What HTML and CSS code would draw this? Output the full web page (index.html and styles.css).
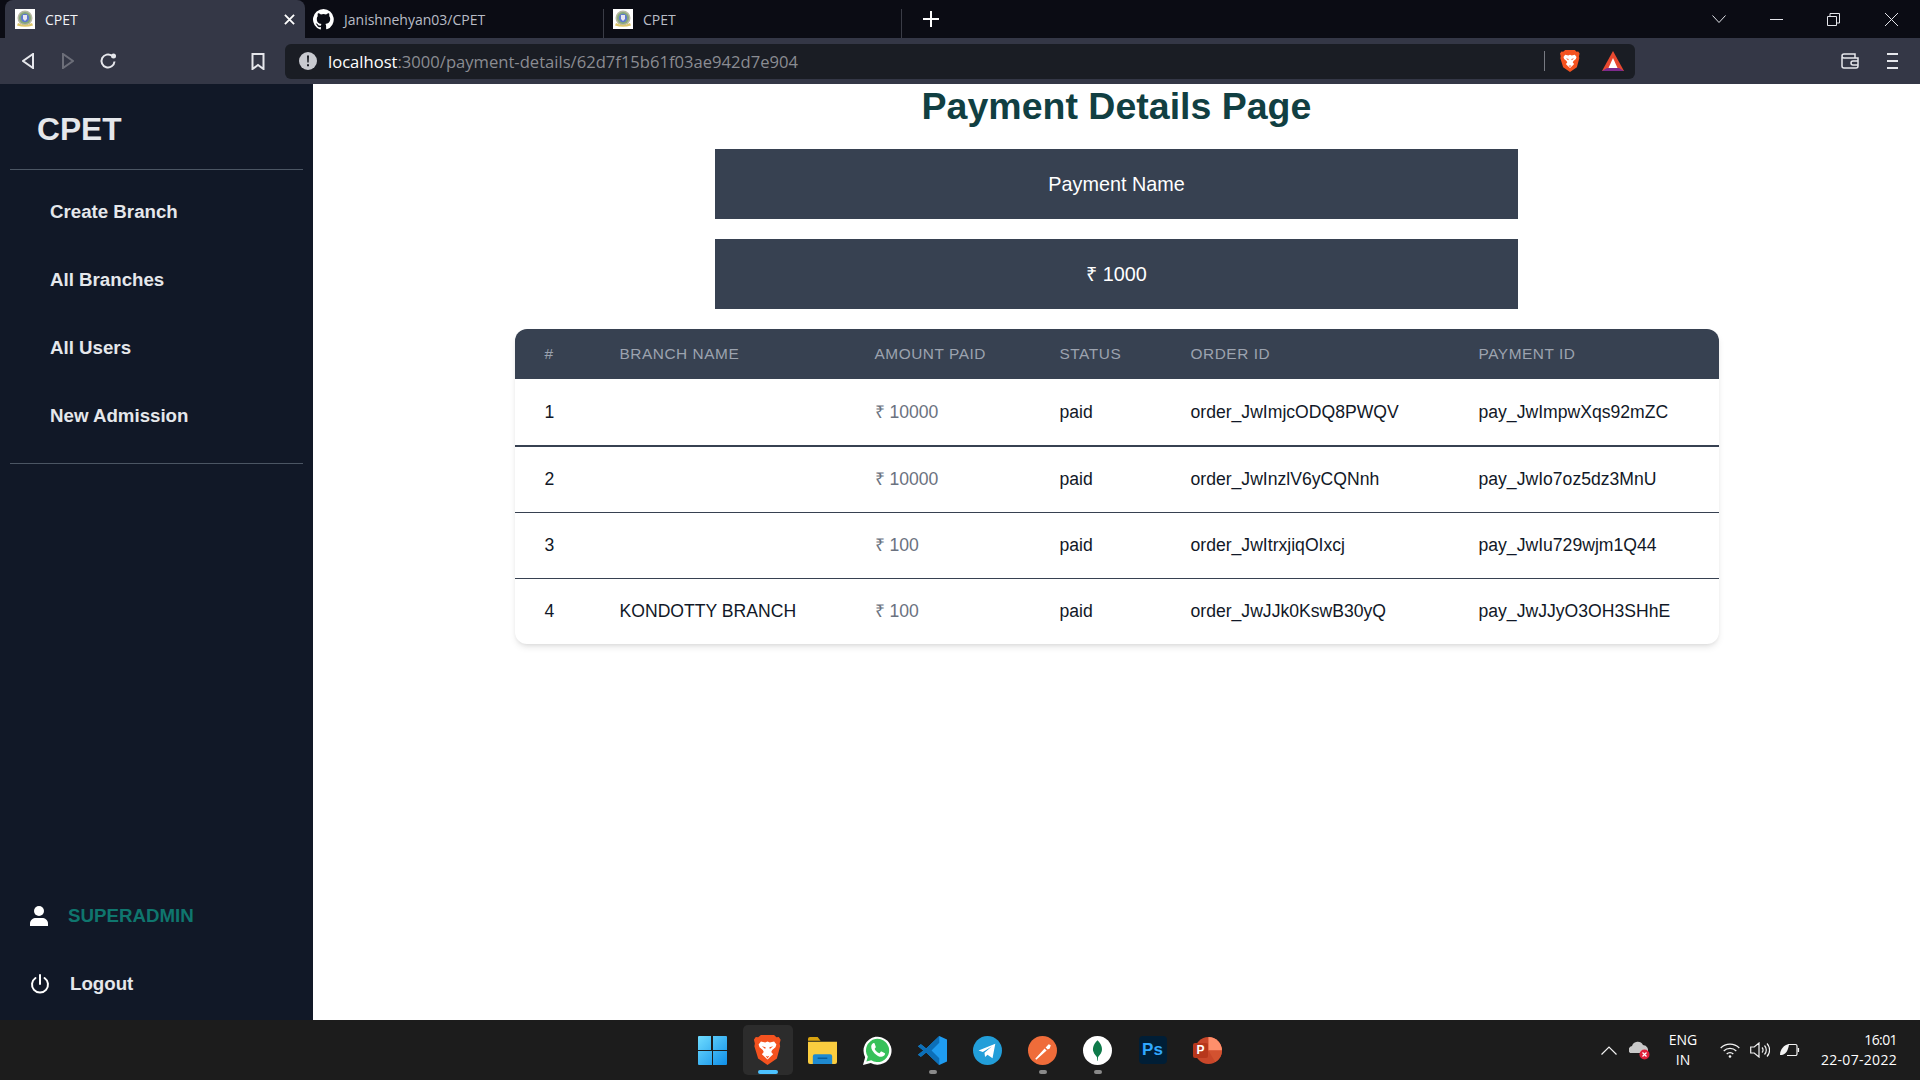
FILE: index.html
```html
<!DOCTYPE html>
<html>
    <head>
        <meta charset="utf-8">
        <title>CPET</title>
        <link rel="stylesheet" href="styles.css">
    </head>
    <body>
        <svg class="defs" width="0" height="0">
            <symbol id="favicon" viewBox="0 0 20 20">
                <rect width="20" height="20" fill="#fff"/>
                <circle cx="10" cy="9" r="7.500" fill="#b9b8a4"/>
                <circle cx="10" cy="9" r="6" fill="#86a878"/>
                <circle cx="10" cy="9" r="4.200" fill="#5f78cf"/>
                <path d="M8 6h4v4l-2 2-2-2z" fill="#e8e6f0"/>
                <path d="M3 14q7 4 14 0l1 2.500q-8 2.500-16 0z" fill="#dcc66a"/>
            </symbol>
            <symbol id="lion" viewBox="0 0 28 32">
                <path d="M7 0h14l2.500 2.500 2.500-.5 2 3-1 4 .5 3L24 25l-10 7L4 25 .0 12l.5-3-1-4 2-3 2.500.5z" fill="#f4521f"/>
                <path d="M7 7l4.500 1L14 7l2.500 1L21 7l2.500 3-1 3-3.500 3-1 2 2 2.500-2 2-4 3.500-4-3.500-2-2 2-2.500-1-2-3.500-3-1-3z" fill="#fff"/>
                <path d="M8 12l4 1-.5 2zM20 12l-4 1 .5 2zM12 22l2 1 2-1-2 3z" fill="#f4521f"/>
            </symbol>
        </svg>

        <div class="tabstrip">
            <div class="tab active">
                <svg class="favicon"><use href="#favicon"/></svg>
                <span class="tab-title">CPET</span>
                <svg class="tab-close" viewBox="0 0 12 12"><path d="M1 1l10 10M11 1L1 11"/></svg>
            </div>
            <div class="tab second">
                <svg class="github" viewBox="0 0 16 16"><path d="M8 0a8 8 0 0 0-2.500 15.600c.4.100.5-.2.5-.4v-1.400c-2.200.5-2.700-1-2.700-1-.4-.9-.9-1.200-.9-1.200-.7-.5.1-.5.1-.5.8.1 1.200.8 1.200.8.7 1.200 1.900.9 2.300.7.1-.5.3-.9.5-1.100-1.800-.2-3.600-.9-3.600-4 0-.9.3-1.600.8-2.100-.1-.2-.4-1 .1-2.100 0 0 .7-.2 2.200.8a7.600 7.600 0 0 1 4 0c1.500-1 2.200-.8 2.200-.8.4 1.100.2 1.900.1 2.100.5.6.8 1.300.8 2.100 0 3.100-1.900 3.700-3.700 3.900.3.3.6.8.6 1.500v2.200c0 .2.100.5.6.4A8 8 0 0 0 8 0z"/></svg>
                <span class="tab-title dim">Janishnehyan03/CPET</span>
            </div>
            <span class="tab-sep"></span>
            <div class="tab third">
                <svg class="favicon"><use href="#favicon"/></svg>
                <span class="tab-title dim">CPET</span>
            </div>
            <span class="tab-sep"></span>
            <svg class="new-tab" viewBox="0 0 16 16"><path d="M8 0v16M0 8h16"/></svg>
            <div class="window-btns">
                <svg class="win-chevron" viewBox="0 0 14 8"><path d="M.5.5L7 7.500 13.500.5"/></svg>
                <svg class="win-min" viewBox="0 0 13 1"><path d="M0 .5h13"/></svg>
                <svg class="win-restore" viewBox="0 0 13 13"><path d="M.5 3.500h9v9h-9zM3 3.500V.5h9.500v9.500H9.500"/></svg>
                <svg class="win-close" viewBox="0 0 13 13"><path d="M0 0l13 13M13 0L0 13"/></svg>
            </div>
        </div>

        <div class="toolbar">
            <svg class="nav-back" viewBox="0 0 12 16"><path d="M11 1v14L1 8z"/></svg>
            <svg class="nav-forward" viewBox="0 0 12 16"><path d="M1 1v14l10-7z"/></svg>
            <svg class="nav-reload" viewBox="0 0 18 18"><path d="M15.500 9.500a6.500 6.500 0 1 1-2.500-5.700"/><circle cx="14.500" cy="4" r="2.500" class="solid"/></svg>
            <svg class="nav-bookmark" viewBox="0 0 14 17"><path d="M1.500 1h11v15L7 12l-5.500 4z"/></svg>
            <div class="omnibox">
                <svg class="site-info" viewBox="0 0 18 18"><circle cx="9" cy="9" r="9" fill="#c8cad0"/><path d="M8 3.500h2l-.3 7H8.300zM8 12.200h2v2H8z" fill="#1a1d24"/></svg>
                <span class="url"><span class="host">localhost</span>:3000/payment-details/62d7f15b61f03ae942d7e904</span>
                <span class="omni-sep"></span>
                <svg class="omni-lion"><use href="#lion"/></svg>
                <svg class="omni-bat" viewBox="0 0 22 20">
                    <path d="M11 0l11 20H0z" fill="#e8492f"/>
                    <path d="M0 20l5-3h12l5 3z" fill="#7d2a8c"/>
                    <path d="M11 7l4.500 10h-9z" fill="#fff"/>
                </svg>
            </div>
            <svg class="wallet" viewBox="0 0 18 16"><path d="M1 4v9a2 2 0 0 0 2 2h12a2 2 0 0 0 2-2V5H3a2 2 0 0 1-2-2 2 2 0 0 1 2-2h11v4M17 8h-5a2 2 0 0 0 0 4h5"/></svg>
            <svg class="menu" viewBox="0 0 11 16"><path d="M0 1h11M0 8h11M0 15h11"/></svg>
        </div>

        <div class="app">
            <aside class="sidebar">
                <div class="logo">CPET</div>
                <div class="divider"></div>
                <nav class="links">
                    <a class="link">Create Branch</a>
                    <a class="link">All Branches</a>
                    <a class="link">All Users</a>
                    <a class="link">New Admission</a>
                </nav>
                <div class="divider"></div>
                <div class="side-bottom">
                    <div class="side-row">
                        <svg class="user-icon" viewBox="0 0 18 20"><circle cx="9" cy="5" r="5"/><path d="M0 20v-2.500C0 14 3 12 6 12h6c3 0 6 2 6 5.500V20z"/></svg>
                        <span class="username">SUPERADMIN</span>
                    </div>
                    <div class="side-row">
                        <svg class="power-icon" viewBox="0 0 20 20"><path d="M5.500 4a8 8 0 1 0 9 0M10 1v9"/></svg>
                        <span class="logout">Logout</span>
                    </div>
                </div>
            </aside>

            <main class="content">
                <h1>Payment Details Page</h1>
                <div class="info-box">Payment Name</div>
                <div class="info-box">₹ 1000</div>

                <div class="card">
                    <table>
                        <thead>
                            <tr>
                                <th class="col-num">#</th>
                                <th class="col-branch">Branch Name</th>
                                <th class="col-amount">Amount Paid</th>
                                <th class="col-status">Status</th>
                                <th class="col-order">Order ID</th>
                                <th>Payment ID</th>
                            </tr>
                        </thead>
                        <tbody>
                            <tr class="first">
                                <td>1</td>
                                <td></td>
                                <td class="amount">₹ 10000</td>
                                <td>paid</td>
                                <td>order_JwImjcODQ8PWQV</td>
                                <td>pay_JwImpwXqs92mZC</td>
                            </tr>
                            <tr>
                                <td>2</td>
                                <td></td>
                                <td class="amount">₹ 10000</td>
                                <td>paid</td>
                                <td>order_JwInzlV6yCQNnh</td>
                                <td>pay_JwIo7oz5dz3MnU</td>
                            </tr>
                            <tr>
                                <td>3</td>
                                <td></td>
                                <td class="amount">₹ 100</td>
                                <td>paid</td>
                                <td>order_JwItrxjiqOIxcj</td>
                                <td>pay_JwIu729wjm1Q44</td>
                            </tr>
                            <tr class="last">
                                <td>4</td>
                                <td>KONDOTTY BRANCH</td>
                                <td class="amount">₹ 100</td>
                                <td>paid</td>
                                <td>order_JwJJk0KswB30yQ</td>
                                <td>pay_JwJJyO3OH3SHhE</td>
                            </tr>
                        </tbody>
                    </table>
                </div>
            </main>
        </div>

        <div class="taskbar">
            <div class="task-left"></div>
            <div class="task-icons">
                <div class="task-item">
                    <svg viewBox="0 0 29 29">
                        <defs><linearGradient id="winblue" x1="0" y1="0" x2="1" y2="1"><stop offset="0" stop-color="#6fdcff"/><stop offset="1" stop-color="#0f8fe8"/></linearGradient></defs>
                        <path d="M0 1a1 1 0 0 1 1-1h12v14H0zM15 0h13a1 1 0 0 1 1 1v13H15zM0 15h14v14H1a1 1 0 0 1-1-1zM15 15h14v13a1 1 0 0 1-1 1H15z" fill="url(#winblue)"/>
                    </svg>
                </div>
                <div class="task-item current">
                    <svg class="task-lion"><use href="#lion"/></svg>
                    <span class="dot blue"></span>
                </div>
                <div class="task-item">
                    <svg viewBox="0 0 30 28">
                        <path d="M0 2a2 2 0 0 1 2-2h8l3 4h-13z" fill="#d9a30f"/>
                        <path d="M0 5h30v21a2 2 0 0 1-2 2H2a2 2 0 0 1-2-2z" fill="#fbcd3f"/>
                        <path d="M5 24a2 2 0 0 1 0-1v-3a2 2 0 0 1 2-2h16a2 2 0 0 1 2 2v8H5z" fill="#1f8ad0"/>
                        <path d="M10 22h10" stroke="#0b5c98" stroke-width="1.500"/>
                    </svg>
                </div>
                <div class="task-item">
                    <svg viewBox="0 0 30 30">
                        <path d="M0 30l2.200-8A14.500 14.500 0 1 1 8 27.900z" fill="#fff"/>
                        <path d="M3.500 26.500l1.500-5A12 12 0 1 1 8.500 25z" fill="#37c15a"/>
                        <path d="M10.500 7.500c-1 .5-2 2-2 3.500 0 4.500 6 10.500 10.500 10.500 1.500 0 3-1 3.500-2 .3-.8.3-1.500.2-1.700l-3.500-1.800c-.4-.1-.7 0-.9.300l-1 1.300c-.2.200-.5.300-.8.100-1.800-.8-3.400-2.300-4.300-4-.1-.3-.1-.5.100-.7l.8-1c.2-.3.2-.6.100-.9L12 7.700c-.2-.4-1-.4-1.500-.2z" fill="#fff"/>
                    </svg>
                </div>
                <div class="task-item">
                    <svg viewBox="0 0 30 30">
                        <path d="M22 0l8 3.500v23L22 30 8.500 17 3 21.500 0 19.500 5.500 15 0 10.500 3 8.500 8.500 13z" fill="#1f9cf0"/>
                        <path d="M22 0v7l-8 8 8 8v7L8.500 17 3 21.500 0 19.500 5.500 15 0 10.500 3 8.500 8.500 13z" fill="#0c6fb8"/>
                    </svg>
                    <span class="dot"></span>
                </div>
                <div class="task-item">
                    <svg viewBox="0 0 26 26">
                        <circle cx="13" cy="13" r="13" fill="#229ed9"/>
                        <path d="M5 13l15-6-2.500 13-4.500-3.200-2.200 2-.5-3.800 6.500-5.500-8 4.800z" fill="#fff"/>
                    </svg>
                </div>
                <div class="task-item">
                    <svg viewBox="0 0 28 28">
                        <circle cx="14" cy="14" r="14" fill="#ef6c3a"/>
                        <path d="M7 22l9-10 2 2-10 9zM17 11l3-3 2 1-1 3-2 1z" fill="#fff"/>
                    </svg>
                    <span class="dot"></span>
                </div>
                <div class="task-item">
                    <svg viewBox="0 0 28 28">
                        <circle cx="14" cy="14" r="14" fill="#fff"/>
                        <path d="M14 4c4 4 5 8 4 11-.8 3-3 4.500-3.500 5.500L14.300 24h-.6l-.2-3.500C13 19.500 10.800 18 10 15c-1-3 0-7 4-11z" fill="#0f7a4a"/>
                    </svg>
                    <span class="dot"></span>
                </div>
                <div class="task-item">
                    <div class="ps-icon">Ps</div>
                </div>
                <div class="task-item">
                    <div class="ppt-icon">
                        <svg viewBox="0 0 30 30">
                            <circle cx="16" cy="15" r="14" fill="#c9472a"/>
                            <path d="M16 1a14 14 0 0 1 14 14H16z" fill="#ff8f6b"/>
                            <path d="M16 15h14a14 14 0 0 1-7 12z" fill="#d35230"/>
                        </svg>
                        <span class="ppt-letter">P</span>
                    </div>
                </div>
            </div>
            <div class="tray">
                <svg class="tray-chevron" viewBox="0 0 16 9"><path d="M.5 8.500L8 1l7.500 7.500"/></svg>
                <svg class="tray-cloud" viewBox="0 0 21 20">
                    <path d="M1 13a4 4 0 0 1 2-7 6 6 0 0 1 11-1 5 5 0 0 1 4 8z" fill="#c9c9c9"/>
                    <circle cx="15.500" cy="14.500" r="5" fill="#e0203a"/>
                    <path d="M13.500 12.500l4 4M17.500 12.500l-4 4" stroke="#fff" stroke-width="1.200"/>
                </svg>
                <div class="lang"><span>ENG</span><span>IN</span></div>
                <svg class="tray-wifi" viewBox="0 0 20 15"><path d="M.7 5a13 13 0 0 1 18.600 0M3.700 8a9 9 0 0 1 12.600 0M6.700 11a4.500 4.500 0 0 1 6.600 0"/><circle cx="10" cy="13.500" r="1.300" class="solid"/></svg>
                <svg class="tray-sound" viewBox="0 0 20 16"><path d="M.7 5h3.500L9 1v14l-4.800-4H.7zM12 5.500a3.500 3.500 0 0 1 0 5M14.500 3.500a6.500 6.500 0 0 1 0 9M17 1.500a9.500 9.500 0 0 1 0 13"/></svg>
                <svg class="tray-battery" viewBox="0 0 20 14"><path d="M8 1.500h7.500a1.500 1.500 0 0 1 1.500 1.500v8a1.500 1.500 0 0 1-1.500 1.500H7M18.500 5v4"/><path d="M0 12c0-6 4-10 9-11-.5 6-3 10-7 11z" class="solid"/></svg>
                <div class="clock"><span class="time">16:01</span><span class="date">22-07-2022</span></div>
            </div>
        </div>
    </body>
</html>
```

FILE: styles.css
```css
*
{
    box-sizing: border-box;
}

html, body
{
    margin: 0;
    padding: 0;
}

body
{
    width: 1920px;
    height: 1080px;
    overflow: hidden;
    display: flex;
    flex-direction: column;
    font-family: "Liberation Sans", Arial, sans-serif;
    background-color: #fff;
}

.defs
{
    position: absolute;
}

svg
{
    display: block;
    flex: none;
}

/* browser tabs */
.tabstrip
{
    height: 38px;
    display: flex;
    align-items: center;
    padding-left: 5px;
    background-color: #0b0c14;
    font-family: "Open Sans", "Noto Sans", sans-serif;
    font-size: 14px;
}

.tab
{
    height: 38px;
    display: flex;
    align-items: center;
}

.tab.active
{
    width: 300px;
    padding-left: 10px;
    background-color: #343746;
    border-radius: 8px 8px 0 0;
}

.tab.second
{
    width: 298px;
    padding-left: 8px;
}

.tab.third
{
    width: 297px;
    padding-left: 9px;
}

.tab-sep
{
    width: 1px;
    height: 29px;
    align-self: flex-end;
    background-color: #3a3c46;
}

.favicon
{
    width: 20px;
    height: 20px;
}

.tab-title
{
    margin-left: 10px;
    color: #f2f3f6;
}

.tab-title.dim
{
    color: #b9bcc6;
}

.tab-close
{
    width: 11px;
    height: 11px;
    margin-left: auto;
    margin-right: 10px;
    fill: none;
    stroke: #fff;
    stroke-width: 2;
}

.github
{
    width: 21px;
    height: 21px;
    fill: #fff;
}

.new-tab
{
    width: 16px;
    height: 16px;
    margin-left: 21px;
    fill: none;
    stroke: #fff;
    stroke-width: 2;
}

.window-btns
{
    margin-left: auto;
    display: flex;
    align-items: center;
    padding-right: 22px;
    fill: none;
    stroke: #e4e5ea;
}

.win-chevron
{
    width: 14px;
    height: 8px;
    margin-right: 44px;
}

.win-min
{
    width: 13px;
    height: 1px;
    margin-right: 44px;
}

.win-restore
{
    width: 13px;
    height: 13px;
    margin-right: 45px;
}

.win-close
{
    width: 13px;
    height: 13px;
}

/* address bar row */
.toolbar
{
    height: 46px;
    display: flex;
    align-items: center;
    background-color: #343746;
    fill: none;
    stroke: #e6e7ec;
    stroke-width: 2;
}

.solid
{
    fill: #e6e7ec;
    stroke: none;
}

.nav-back
{
    width: 12px;
    height: 16px;
    margin-left: 22px;
}

.nav-forward
{
    width: 12px;
    height: 16px;
    margin-left: 28px;
    stroke: #6c6e79;
}

.nav-reload
{
    width: 18px;
    height: 18px;
    margin-left: 25px;
}

.nav-bookmark
{
    width: 14px;
    height: 17px;
    margin-left: 134px;
}

.omnibox
{
    width: 1350px;
    height: 35px;
    margin-left: 20px;
    display: flex;
    align-items: center;
    padding-left: 14px;
    background-color: #1a1d24;
    border-radius: 6px;
    stroke: none;
    font-family: "Open Sans", "Noto Sans", sans-serif;
    font-size: 16.6px;
    color: #8a8c92;
}

.site-info
{
    width: 18px;
    height: 18px;
}

.url
{
    margin-left: 11px;
}

.host
{
    color: #fff;
}

.omni-sep
{
    width: 1px;
    height: 20px;
    margin-left: auto;
    background-color: #777a82;
}

.omni-lion
{
    width: 20px;
    height: 22px;
    margin-left: 15px;
}

.omni-bat
{
    width: 22px;
    height: 20px;
    margin-left: 22px;
    margin-right: 11px;
}

.wallet
{
    width: 18px;
    height: 16px;
    margin-left: 206px;
    stroke-width: 1.5;
}

.menu
{
    width: 11px;
    height: 16px;
    margin-left: 28px;
}

/* page */
.app
{
    flex: 1;
    min-height: 0;
    display: flex;
}

.sidebar
{
    width: 313px;
    display: flex;
    flex-direction: column;
    background-color: #111827;
    color: #e5e7eb;
    font-weight: bold;
    font-size: 18.7px;
}

.logo
{
    height: 85px;
    display: flex;
    align-items: center;
    padding: 5px 0 0 37px;
    font-size: 31.7px;
}

.divider
{
    height: 1px;
    margin: 0 10px;
    background-color: #4b5563;
}

.links
{
    display: flex;
    flex-direction: column;
    padding: 8px 0 13px 50px;
}

.link
{
    height: 68px;
    display: flex;
    align-items: center;
}

.side-bottom
{
    margin-top: auto;
    padding: 0 0 2px 30px;
}

.side-row
{
    height: 68px;
    display: flex;
    align-items: center;
}

.user-icon
{
    width: 18px;
    height: 20px;
    fill: #fff;
}

.username
{
    margin-left: 20px;
    color: #0f766e;
}

.power-icon
{
    width: 20px;
    height: 20px;
    fill: none;
    stroke: #fff;
    stroke-width: 2;
    stroke-linecap: round;
}

.logout
{
    margin-left: 20px;
}

.content
{
    flex: 1;
    display: flex;
    flex-direction: column;
    align-items: center;
}

h1
{
    height: 44px;
    margin: 0 0 21px 0;
    font-size: 37.5px;
    line-height: 44px;
    color: #113f42;
}

.info-box
{
    width: 803px;
    height: 70px;
    margin-bottom: 20px;
    background-color: #374151;
    color: #fff;
    font-size: 19.8px;
    line-height: 70px;
    text-align: center;
}

.card
{
    width: 1204px;
    border-radius: 12px;
    overflow: hidden;
    box-shadow: 0 4px 7px -1px rgba(0,0,0,0.1), 0 2px 4px -2px rgba(0,0,0,0.1);
}

table
{
    width: 100%;
    border-collapse: collapse;
    table-layout: fixed;
    font-size: 17.6px;
    line-height: 20px;
    color: #111827;
}

th
{
    height: 50px;
    padding: 0 0 0 30px;
    background-color: #374151;
    color: #9ca3af;
    font-size: 15.4px;
    font-weight: normal;
    letter-spacing: 0.55px;
    text-align: left;
    text-transform: uppercase;
}

.col-num
{
    width: 75px;
}

.col-branch
{
    width: 255px;
}

.col-amount
{
    width: 185px;
}

.col-status
{
    width: 131px;
}

.col-order
{
    width: 288px;
}

td
{
    height: 66px;
    padding: 0 0 0 30px;
    border-bottom: 1px solid #374151;
}

.first td
{
    height: 67px;
    border-bottom-width: 2px;
}

.last td
{
    border-bottom: 0;
}

.amount
{
    color: #6b7280;
}

/* windows taskbar */
.taskbar
{
    height: 60px;
    display: grid;
    grid-template-columns: 1fr auto 1fr;
    align-items: center;
    background-color: #1c1c1c;
    color: #fff;
    font-family: "Open Sans", "Noto Sans", sans-serif;
    font-size: 14px;
}

.task-icons
{
    display: flex;
    gap: 5px;
}

.task-item
{
    position: relative;
    width: 50px;
    height: 50px;
    display: flex;
    align-items: center;
    justify-content: center;
    border-radius: 5px;
}

.task-item svg
{
    width: 29px;
    height: 29px;
}

.task-item.current
{
    background-color: #2c2c2c;
}

.task-item .task-lion
{
    width: 27px;
    height: 30px;
}

.dot
{
    position: absolute;
    left: 21px;
    bottom: 1px;
    width: 8px;
    height: 4px;
    border-radius: 2px;
    background-color: #8a8a8a;
}

.dot.blue
{
    left: 15px;
    width: 20px;
    background-color: #4cc2ff;
}

.ps-icon
{
    width: 28px;
    height: 28px;
    border-radius: 4px;
    background-color: #001e36;
    color: #31a8ff;
    font-family: "Liberation Sans", sans-serif;
    font-size: 17px;
    font-weight: bold;
    line-height: 27px;
    text-align: center;
}

.ppt-icon
{
    position: relative;
    width: 29px;
    height: 29px;
}

.ppt-letter
{
    position: absolute;
    left: 0;
    top: 7px;
    width: 15px;
    height: 15px;
    border-radius: 2px;
    background-color: #b7371c;
    color: #fff;
    font-family: "Liberation Sans", sans-serif;
    font-size: 12px;
    font-weight: bold;
    line-height: 15px;
    text-align: center;
}

.tray
{
    display: flex;
    align-items: center;
    justify-content: flex-end;
    padding-right: 23px;
    fill: none;
    stroke: #f2f2f2;
    stroke-width: 1.2;
}

.tray .solid
{
    fill: #f2f2f2;
}

.tray-chevron
{
    width: 16px;
    height: 9px;
}

.tray-cloud
{
    width: 21px;
    height: 20px;
    margin-left: 12px;
    stroke: none;
}

.lang
{
    width: 40px;
    margin-left: 13px;
    display: flex;
    flex-direction: column;
    align-items: center;
    line-height: 20px;
}

.tray-wifi
{
    width: 20px;
    height: 15px;
    margin-left: 17px;
}

.tray-sound
{
    width: 20px;
    height: 16px;
    margin-left: 10px;
}

.tray-battery
{
    width: 20px;
    height: 14px;
    margin-left: 10px;
}

.clock
{
    width: 97px;
    display: flex;
    flex-direction: column;
    align-items: flex-end;
    line-height: 20px;
}

.time
{
    letter-spacing: -0.6px;
}

.date
{
    letter-spacing: 0.3px;
}
```
